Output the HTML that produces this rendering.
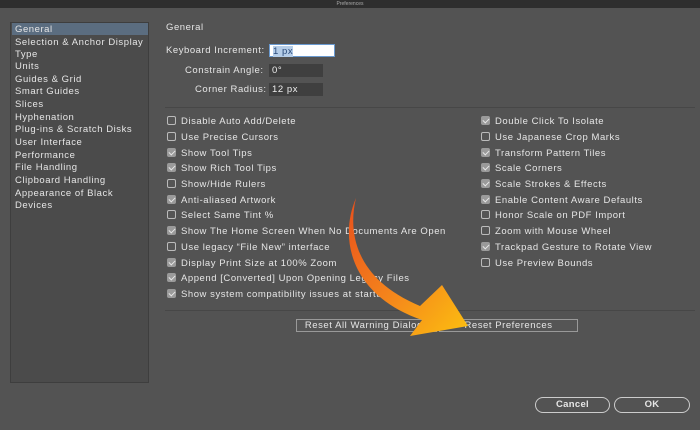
<!DOCTYPE html><html><head><style>
*{margin:0;padding:0;box-sizing:border-box}
body{width:700px;height:430px;background:#535353;font-family:"Liberation Sans",sans-serif;font-size:9.5px;letter-spacing:0.55px;color:#e6e6e6;position:relative;overflow:hidden}
.a{position:absolute;white-space:nowrap}
.tb{left:0;top:0;width:700px;height:8px;background:#2e2e2e;font-size:5px;color:#aaa;text-align:center;line-height:8px;letter-spacing:0}
.lp{left:10px;top:22px;width:139px;height:361px;background:#4b4b4b;border:1px solid #3e3e3e}
.li{left:15px}
.cb{width:9px;height:9px;border:1px solid #bbb;border-radius:2px;background:#555}
.cb.c{background:#9a9a9a;border-color:#9a9a9a}
.cb.c:after{content:"";position:absolute;left:2px;top:0px;width:3px;height:5px;border:solid #e8e8e8;border-width:0 1.5px 1.5px 0;transform:rotate(45deg)}
.in{height:13px;background:#3f3f3f;color:#eee;padding-left:3px;line-height:13px}
.btn{border:1px solid #999;height:13px;line-height:12px;text-align:center;background:#555}
.rb{border:1px solid #ccc;border-radius:8px;height:16px;line-height:14px;text-align:center;font-weight:bold;letter-spacing:0.3px}
.hr{height:1px;background:#474747;left:165px;width:530px}
</style></head><body>
<div class="a tb">Preferences</div>
<div class="a lp"></div>
<div class="a" style="left:12px;top:23px;width:136px;height:12px;background:#5b6d80"></div>
<div class="a li" style="top:24px">General</div>
<div class="a li" style="top:37px">Selection &amp; Anchor Display</div>
<div class="a li" style="top:49px">Type</div>
<div class="a li" style="top:61px">Units</div>
<div class="a li" style="top:74px">Guides &amp; Grid</div>
<div class="a li" style="top:86px">Smart Guides</div>
<div class="a li" style="top:99px">Slices</div>
<div class="a li" style="top:112px">Hyphenation</div>
<div class="a li" style="top:124px">Plug-ins &amp; Scratch Disks</div>
<div class="a li" style="top:137px">User Interface</div>
<div class="a li" style="top:150px">Performance</div>
<div class="a li" style="top:162px">File Handling</div>
<div class="a li" style="top:175px">Clipboard Handling</div>
<div class="a li" style="top:188px">Appearance of Black</div>
<div class="a li" style="top:200px">Devices</div>

<div class="a" style="left:166px;top:22px">General</div>
<div class="a" style="left:166px;top:45px">Keyboard Increment:</div>
<div class="a in" style="left:269px;top:44px;width:66px;background:#fff;color:#2a4a7a;border:1px solid #6a9ad0"><span style="background:#b5cde8">1 px</span></div>
<div class="a" style="left:185px;top:65px">Constrain Angle:</div>
<div class="a in" style="left:269px;top:64px;width:54px">0°</div>
<div class="a" style="left:195px;top:84px">Corner Radius:</div>
<div class="a in" style="left:269px;top:83px;width:54px">12 px</div>
<div class="a hr" style="top:107px"></div>

<div class="a cb" style="left:167px;top:116px"></div><div class="a" style="left:181px;top:116px">Disable Auto Add/Delete</div>
<div class="a cb" style="left:167px;top:132px"></div><div class="a" style="left:181px;top:132px">Use Precise Cursors</div>
<div class="a cb c" style="left:167px;top:148px"></div><div class="a" style="left:181px;top:148px">Show Tool Tips</div>
<div class="a cb c" style="left:167px;top:163px"></div><div class="a" style="left:181px;top:163px">Show Rich Tool Tips</div>
<div class="a cb" style="left:167px;top:179px"></div><div class="a" style="left:181px;top:179px">Show/Hide Rulers</div>
<div class="a cb c" style="left:167px;top:195px"></div><div class="a" style="left:181px;top:195px">Anti-aliased Artwork</div>
<div class="a cb" style="left:167px;top:210px"></div><div class="a" style="left:181px;top:210px">Select Same Tint %</div>
<div class="a cb c" style="left:167px;top:226px"></div><div class="a" style="left:181px;top:226px">Show The Home Screen When No Documents Are Open</div>
<div class="a cb" style="left:167px;top:242px"></div><div class="a" style="left:181px;top:242px">Use legacy “File New” interface</div>
<div class="a cb c" style="left:167px;top:258px"></div><div class="a" style="left:181px;top:258px">Display Print Size at 100% Zoom</div>
<div class="a cb c" style="left:167px;top:273px"></div><div class="a" style="left:181px;top:273px">Append [Converted] Upon Opening Legacy Files</div>
<div class="a cb c" style="left:167px;top:289px"></div><div class="a" style="left:181px;top:289px">Show system compatibility issues at startup</div>

<div class="a cb c" style="left:481px;top:116px"></div><div class="a" style="left:495px;top:116px">Double Click To Isolate</div>
<div class="a cb" style="left:481px;top:132px"></div><div class="a" style="left:495px;top:132px">Use Japanese Crop Marks</div>
<div class="a cb c" style="left:481px;top:148px"></div><div class="a" style="left:495px;top:148px">Transform Pattern Tiles</div>
<div class="a cb c" style="left:481px;top:163px"></div><div class="a" style="left:495px;top:163px">Scale Corners</div>
<div class="a cb c" style="left:481px;top:179px"></div><div class="a" style="left:495px;top:179px">Scale Strokes &amp; Effects</div>
<div class="a cb c" style="left:481px;top:195px"></div><div class="a" style="left:495px;top:195px">Enable Content Aware Defaults</div>
<div class="a cb" style="left:481px;top:210px"></div><div class="a" style="left:495px;top:210px">Honor Scale on PDF Import</div>
<div class="a cb" style="left:481px;top:226px"></div><div class="a" style="left:495px;top:226px">Zoom with Mouse Wheel</div>
<div class="a cb c" style="left:481px;top:242px"></div><div class="a" style="left:495px;top:242px">Trackpad Gesture to Rotate View</div>
<div class="a cb" style="left:481px;top:258px"></div><div class="a" style="left:495px;top:258px">Use Preview Bounds</div>

<div class="a hr" style="top:310px"></div>
<div class="a btn" style="left:296px;top:319px;width:141px">Reset All Warning Dialogs</div>
<div class="a btn" style="left:439px;top:319px;width:139px">Reset Preferences</div>

<svg class="a" style="left:0;top:0" width="700" height="430">
<defs><linearGradient id="g" x1="0" y1="0" x2="1" y2="1"><stop offset="0" stop-color="#e8501c"/><stop offset="0.5" stop-color="#f4821c"/><stop offset="1" stop-color="#fcc010"/></linearGradient></defs>
<path d="M356 198 C346 240 362 282 420 306 L442 285 L468 326 L410 336 L422 320 C352 296 338 240 356 198 Z" fill="url(#g)"/>
</svg>

<div class="a rb" style="left:535px;top:397px;width:75px">Cancel</div>
<div class="a rb" style="left:614px;top:397px;width:76px">OK</div>
</body></html>
